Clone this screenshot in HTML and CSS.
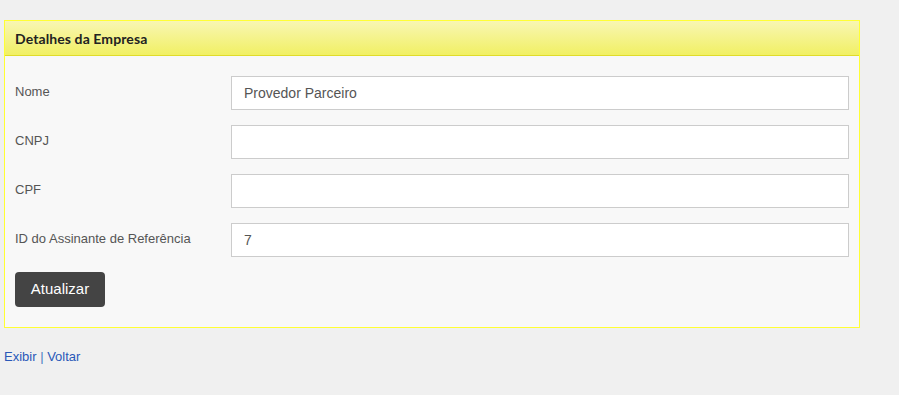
FILE: index.html
```html
<!DOCTYPE html>
<html lang="pt">
<head>
<meta charset="utf-8">
<link rel="stylesheet" href="styles.css">
</head>
<body>
<div class="panel">
  <div class="panel-header">Detalhes da Empresa</div>
  <form class="panel-body">
    <div class="row"><label class="lbl">Nome</label><input class="inp" type="text" value="Provedor Parceiro"></div>
    <div class="row"><label class="lbl">CNPJ</label><input class="inp" type="text" value=""></div>
    <div class="row"><label class="lbl">CPF</label><input class="inp" type="text" value=""></div>
    <div class="row"><label class="lbl">ID do Assinante de Referência</label><input class="inp" type="text" value="7"></div>
    <div class="actions"><button class="btn" type="button">Atualizar</button></div>
  </form>
</div>
<div class="links"><a href="#">Exibir</a> <span class="sep">|</span> <a href="#">Voltar</a></div>
</body>
</html>
```
FILE: styles.css
```css
html, body { margin: 0; padding: 0; }
body {
  background: #f0f0f0;
  font-family: Arial, "Liberation Sans", sans-serif;
  font-size: 13px;
  color: #555;
  padding: 20px 0 0 4px;
}
.panel {
  width: 854px;
  border: 1px solid #ffff33;
  background: #f8f8f8;
}
.panel-header {
  height: 35px;
  box-sizing: border-box;
  border-bottom: 1px solid #e0dc2a;
  background: linear-gradient(#f8f6b3, #f1f064);
  font-family: Lato, sans-serif;
  font-weight: bold;
  font-size: 14px;
  letter-spacing: 0.1px;
  color: #222;
  padding: 0 10px;
  display: flex;
  align-items: center;
}
.panel-body {
  margin: 0;
  padding: 20px 10px 20px 10px;
  display: flex;
  flex-direction: column;
  gap: 15px;
}
.row {
  display: flex;
  align-items: center;
}
.lbl {
  width: 216px;
  flex: none;
  color: #555;
  font-size: 13px;
  position: relative;
  top: -2px;
}
.inp {
  flex: 1;
  height: 34px;
  box-sizing: border-box;
  border: 1px solid #ccc;
  background: #fff;
  padding: 0 12px;
  font-family: Arial, "Liberation Sans", sans-serif;
  font-size: 14px;
  color: #555;
  outline: none;
}
.actions { display: flex; }
.btn {
  width: 90px;
  height: 35px;
  border: none;
  border-radius: 4px;
  background: #444;
  color: #fff;
  font-family: Arial, "Liberation Sans", sans-serif;
  font-size: 15px;
  padding: 0 0 3px 0;
}
.links {
  margin-top: 21px;
  font-size: 13px;
  line-height: 16px;
}
.links a { color: #2a58b8; text-decoration: none; }
.links .sep { color: #4a7fc0; }
```
